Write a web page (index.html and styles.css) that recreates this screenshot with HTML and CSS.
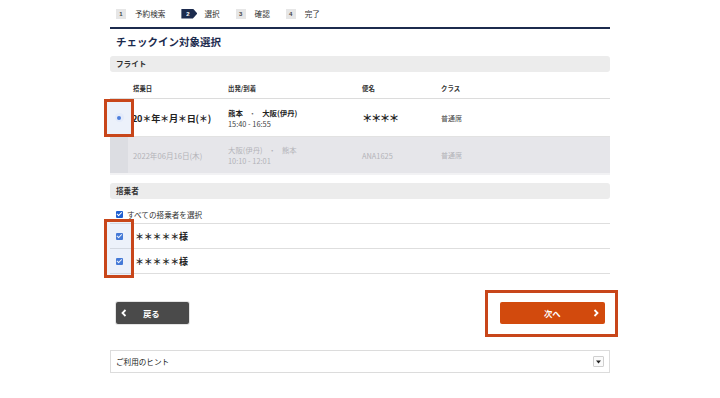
FILE: index.html
```html
<!DOCTYPE html>
<html lang="ja">
<head>
<meta charset="utf-8">
<title>チェックイン対象選択</title>
<link rel="stylesheet" href="styles.css">
</head>
<body>
<div class="page">
  <ol class="steps">
    <li class="step"><span class="badge">1</span><span class="step-label">予約検索</span></li>
    <li class="step current"><span class="badge">2</span><span class="step-label">選択</span></li>
    <li class="step"><span class="badge">3</span><span class="step-label">確認</span></li>
    <li class="step"><span class="badge">4</span><span class="step-label">完了</span></li>
  </ol>

  <h1 class="title">チェックイン対象選択</h1>

  <section class="section">
    <h2 class="bar">フライト</h2>
    <div class="flight-table">
      <div class="fl-row fl-head">
        <div class="cell sel"></div>
        <div class="cell">搭乗日</div>
        <div class="cell">出発/到着</div>
        <div class="cell">便名</div>
        <div class="cell">クラス</div>
      </div>
      <div class="fl-row fl-active">
        <div class="cell sel"><span class="radio"><span class="radio-dot"></span></span></div>
        <div class="cell date">20＊年＊月＊日(＊)</div>
        <div class="cell route">
          <div class="route-line"><span>熊本</span><span class="dot">・</span><span>大阪(伊丹)</span></div>
          <div class="time">15:40 - 16:55</div>
        </div>
        <div class="cell flno">＊＊＊＊</div>
        <div class="cell cls">普通席</div>
      </div>
      <div class="fl-row fl-disabled">
        <div class="cell sel"></div>
        <div class="cell date">2022年06月16日(木)</div>
        <div class="cell route">
          <div class="route-line"><span>大阪(伊丹)</span><span class="dot">・</span><span>熊本</span></div>
          <div class="time">10:10 - 12:01</div>
        </div>
        <div class="cell flno-sm">ANA1625</div>
        <div class="cell cls">普通席</div>
      </div>
    </div>
  </section>

  <section class="section pax">
    <h2 class="bar">搭乗者</h2>
    <label class="pax-all"><span class="check"></span>すべての搭乗者を選択</label>
    <div class="pax-row"><span class="check"></span><span class="pax-name">＊＊＊＊＊様</span></div>
    <div class="pax-row"><span class="check"></span><span class="pax-name">＊＊＊＊＊様</span></div>
  </section>

  <div class="actions">
    <button class="btn btn-back" type="button">
      <svg class="chev" width="6" height="8" viewBox="0 0 6 8"><polyline points="4.5,1 1.5,4 4.5,7" fill="none" stroke="#fff" stroke-width="1.8"/></svg>
      <span class="btn-text">戻る</span>
    </button>
    <button class="btn btn-next" type="button">
      <span class="btn-text">次へ</span>
      <svg class="chev" width="6" height="8" viewBox="0 0 6 8"><polyline points="1.5,1 4.5,4 1.5,7" fill="none" stroke="#fff" stroke-width="1.8"/></svg>
    </button>
  </div>

  <div class="hint">
    <span class="hint-text">ご利用のヒント</span>
    <span class="hint-toggle"><svg width="5" height="4" viewBox="0 0 5 4"><polygon points="0,0.5 5,0.5 2.5,3.5" fill="#222"/></svg></span>
  </div>

  <div class="mark mark-radio"></div>
  <div class="mark mark-check"></div>
  <div class="mark mark-next"></div>
</div>
</body>
</html>
```

FILE: styles.css
```css
* { box-sizing: border-box; }
html, body { margin: 0; padding: 0; background: #fff; }
body {
  font-family: "Noto Sans CJK JP", "Noto Sans", sans-serif;
  color: #222;
}
.page {
  position: relative;
  width: 500px;
  margin: 0 auto;
}

/* steps */
.steps {
  list-style: none;
  margin: 0;
  padding: 0 0 0 6px;
  height: 29px;
  display: flex;
  align-items: center;
  gap: 14px;
  border-bottom: 2px solid #1c2b4e;
}
.step { display: flex; align-items: center; gap: 9px; }
.step + .step { margin-left: 2px; }
.badge {
  width: 10px; height: 10px;
  background: #e6e6e6;
  color: #444;
  font-family: "Liberation Sans", sans-serif;
  font-size: 6px;
  font-weight: bold;
  display: flex; align-items: center; justify-content: center;
}
.current .badge {
  width: 16px;
  background: #1c2b4e;
  color: #fff;
  clip-path: polygon(0 0, 72% 0, 100% 50%, 72% 100%, 0 100%);
  padding-right: 3px;
}
.current { gap: 7px; }
.step-label { font-size: 7.6px; color: #333; }

.title {
  margin: 0;
  height: 27px;
  padding: 6px 0 0 6px;
  font-size: 10.5px;
  line-height: 14px;
  font-weight: bold;
  color: #1c2b4e;
}

.bar {
  margin: 0;
  height: 16px;
  background: #ececec;
  border-radius: 3px;
  padding-left: 6px;
  font-size: 7.6px;
  line-height: 16px;
  font-weight: bold;
  color: #333;
}

/* flight table */
.flight-table { font-size: 7.6px; }
.fl-row {
  display: grid;
  grid-template-columns: 18px 95px 134px 79px 1fr;
}
.cell { padding-left: 5px; }
.sel { padding-left: 0; }
.fl-head {
  height: 27px;
  align-items: end;
  padding-bottom: 5px;
  font-size: 6.4px;
  font-weight: bold;
  color: #333;
  border-bottom: 1px solid #dcdcdc;
}
.fl-active {
  height: 38px;
  align-items: center;
  border-bottom: 1px solid #e2e2e2;
}
.fl-active .sel { height: 100%; display: flex; align-items: center; justify-content: center; }
.radio {
  width: 9px; height: 9px;
  border-radius: 50%;
  background: #f4f7ff;
  display: flex; align-items: center; justify-content: center;
}
.radio-dot { width: 4px; height: 4px; border-radius: 50%; background: #2a66d8; }
.date { font-size: 9.2px; font-weight: bold; letter-spacing: -0.3px; color: #222; }
.fl-active .date { padding-left: 4px; }
.route { font-size: 7.4px; line-height: 11px; }
.route-line { font-weight: bold; display: flex; gap: 6px; }
.route-line .dot { color: #666; font-weight: normal; }
.fl-active .time { color: #444; }
.flno { font-size: 10.5px; font-weight: bold; letter-spacing: -1.6px; }
.cls { font-size: 7px; color: #444; }
.fl-disabled {
  height: 38px;
  align-items: center;
  background: #e6e6ea;
  border-bottom: 2px solid #f2f2f4;
  color: #b3b3b8;
}
.fl-disabled .sel { height: 100%; background: #dcdde2; }
.fl-disabled .date { font-size: 7.6px; font-weight: normal; color: #b3b3b8; letter-spacing: 0; }
.fl-disabled .route-line { font-weight: normal; }
.fl-disabled .route-line .dot { color: #b3b3b8; }
.flno-sm { font-size: 7.4px; }
.fl-disabled .cls { color: #b3b3b8; }

/* passengers */
.pax { margin-top: 8px; }
.check {
  width: 7px; height: 7px;
  border-radius: 1px;
  background: #1f5fd0;
  position: relative;
  flex: none;
}
.check::after {
  content: "";
  position: absolute;
  left: 2px; top: 0.8px;
  width: 2px; height: 3.5px;
  border: solid #fff;
  border-width: 0 1.2px 1.2px 0;
  transform: rotate(45deg);
}
.pax-all {
  height: 25px;
  display: flex;
  align-items: center;
  gap: 4px;
  padding: 6px 0 0 6px;
  font-size: 7.6px;
  color: #333;
  border-bottom: 1px solid #dedede;
}
.pax-row {
  height: 25px;
  display: flex;
  align-items: center;
  gap: 12px;
  padding-left: 6px;
  border-bottom: 1px solid #dedede;
}
.pax-name { font-size: 9px; font-weight: bold; color: #222; letter-spacing: -0.2px; }

/* actions */
.actions {
  margin-top: 28px;
  display: flex;
  justify-content: space-between;
  padding: 0 5px 0 6px;
}
.btn {
  border: none;
  border-radius: 2px;
  height: 22px;
  display: flex;
  align-items: center;
  font-family: inherit;
  font-weight: bold;
  font-size: 8.4px;
  color: #fff;
  cursor: pointer;
}
.btn-back {
  width: 73px;
  background: #4a4a4a;
  box-shadow: 0 0 0 1px #e4e4e4;
  padding: 0 0 0 5px;
  gap: 16px;
}
.btn-next {
  width: 105px;
  background: #d24a0d;
  padding: 0 6px 0 44px;
  justify-content: space-between;
}

/* hint */
.hint {
  margin-top: 26px;
  height: 23px;
  border: 1px solid #dcdcdc;
  display: flex;
  align-items: center;
  justify-content: space-between;
  padding: 0 5px 0 5px;
}
.hint-text { font-size: 7.6px; color: #222; }
.hint-toggle {
  width: 11px; height: 11px;
  border: 1px solid #cfcfcf;
  border-radius: 1px;
  background: #fafafa;
  display: flex; align-items: center; justify-content: center;
}

/* annotation frames */
.mark {
  position: absolute;
  border: 3px solid #c8461a;
  background: rgba(180, 200, 235, 0.25);
  pointer-events: none;
}
.mark-radio { left: -6px; top: 99px; width: 30px; height: 38px; }
.mark-check { left: -6px; top: 219px; width: 30px; height: 59px; }
.mark-next { left: 375px; top: 290px; width: 133px; height: 47px; background: transparent; }
```
